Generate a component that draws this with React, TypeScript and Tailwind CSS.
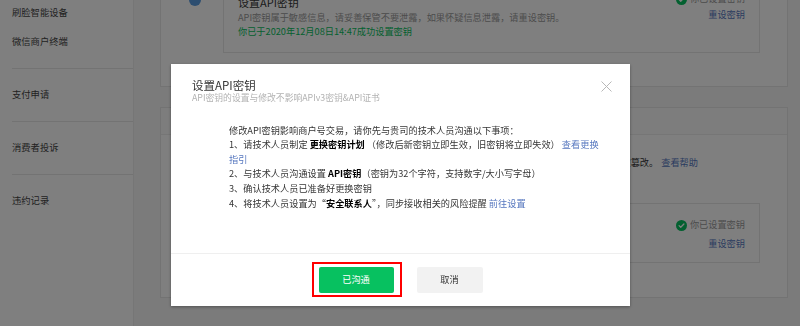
import React from 'react';

const LINK = 'text-[#5677bf]';

function CheckBadge() {
  return (
    <svg width="11" height="11" viewBox="0 0 16 16" className="shrink-0">
      <circle cx="8" cy="8" r="8" fill="#07c160" />
      <path d="M4.5 8.2l2.4 2.4 4.6-4.8" fill="none" stroke="#fff" strokeWidth="1.8" strokeLinecap="round" strokeLinejoin="round" />
    </svg>
  );
}

function Sidebar() {
  const groups = [['刷脸智能设备', '微信商户终端'], ['支付申请'], ['消费者投诉'], ['违约记录']];
  return (
    <aside className="w-[134px] shrink-0 bg-white border-r border-[#ececec] pl-3">
      <div className="-mt-[13px]">
        {groups.map((g, i) => (
          <div key={i} className={`py-[11.5px] ${i < groups.length - 1 ? 'border-b border-[#e6e6e6]' : ''}`}>
            {g.map((t) => (
              <div key={t} className="h-[29px] flex items-center text-[9.3px] text-[#444]">
                {t}
              </div>
            ))}
          </div>
        ))}
      </div>
    </aside>
  );
}

function MainContent() {
  return (
    <main className="flex-1 bg-[#f7f7f7] pl-[26px] pr-3">
      <div className="-mt-[41px] flex flex-col gap-5">
        {/* API密钥 card */}
        <section className="bg-white border border-[#e6e6e6] pt-[20px] pb-[33px] flex">
          <div className="w-[62px] flex justify-center pl-[6px]">
            <div className="w-3 h-3 rounded-full bg-[#5a9ce0] mt-[14px]" />
          </div>
          <div className="flex-1 mr-[27px] border border-[#e6e6e6] px-[14px] pt-[14px] pb-[14px] flex justify-between">
            <div>
              <div className="text-[11px] leading-[14px] text-[#353535]">设置API密钥</div>
              <div className="text-[9.2px] leading-[14px] text-[#999] mt-[1px]">
                API密钥属于敏感信息，请妥善保管不要泄露，如果怀疑信息泄露，请重设密钥。
              </div>
              <div className="text-[9.2px] leading-[14px] text-[#07c160]">你已于2020年12月08日14:47成功设置密钥</div>
            </div>
            <div className="flex flex-col items-end -mt-[3px]">
              <div className="flex items-center gap-[3px] h-[14px] text-[9.2px] text-[#999]">
                <CheckBadge />
                你已设置密钥
              </div>
              <div className={`text-[9.2px] leading-[14px] mt-[1px] ${LINK}`}>重设密钥</div>
            </div>
          </div>
        </section>

        {/* APIv3密钥 card */}
        <section className="bg-white border border-[#e6e6e6] pb-[34px]">
          <div className="h-[27px] bg-[#fafafa] border-b border-[#ececec] flex items-center pl-3 text-[10px] text-[#353535]">
            API安全
          </div>
          <div className="mt-[20px] ml-[76px] w-[461px] flex justify-end whitespace-nowrap text-[9.2px] leading-[14px] text-[#353535] overflow-hidden">
            <span>APIv3密钥主要用于平台证书解密、回调信息解密，请妥善保管，避免回调报文被解密或被篡改。</span>
            <span className={`ml-[3px] ${LINK}`}>查看帮助</span>
          </div>
          <div className="mt-[34px] ml-[62px] mr-[27px] border border-[#e6e6e6] px-[14px] pt-[14px] pb-[12px] flex justify-between">
            <div>
              <div className="text-[11px] leading-[14px] text-[#353535]">设置APIv3密钥</div>
              <div className="text-[9.2px] leading-[14px] text-[#999] mt-[4px]">APIv3密钥用于解密回调报文</div>
            </div>
            <div className="flex flex-col items-end">
              <div className="flex items-center gap-[3px] h-[14px] text-[9.2px] text-[#999]">
                <CheckBadge />
                你已设置密钥
              </div>
              <div className={`text-[9.2px] leading-[14px] mt-[4px] ${LINK}`}>重设密钥</div>
            </div>
          </div>
        </section>
      </div>
    </main>
  );
}

function Modal() {
  return (
    <div className="fixed inset-0 bg-black/50 flex justify-center items-start pt-[64px] pl-px">
      <div className="w-[459px] h-[242px] bg-white shadow-[0_1px_3px_rgba(0,0,0,0.35)] flex flex-col">
        <div className="relative pt-[14px] pl-[21px]">
          <div className="text-[11.5px] leading-[14px] text-[#353535]">设置API密钥</div>
          <div className="text-[8.8px] leading-[12px] text-[#b2b2b2]">API密钥的设置与修改不影响APIv3密钥&amp;API证书</div>
          <button className="absolute top-[17px] right-[18px] w-[11px] h-[11px]" title="关闭">
            <svg width="11" height="11" viewBox="0 0 11 11">
              <path d="M0.5 0.5l10 10M10.5 0.5l-10 10" stroke="#b8b8b8" strokeWidth="1" />
            </svg>
          </button>
        </div>

        <div className="mt-[18.7px] ml-[58px] w-[374px] text-[9.2px] leading-[14.6px] text-[#353535]">
          <p>修改API密钥影响商户号交易，请你先与贵司的技术人员沟通以下事项：</p>
          <p>
            1、请技术人员制定 <b className="font-semibold text-black">更换密钥计划</b> （修改后新密钥立即生效，旧密钥将立即失效）{' '}
            <span className={LINK}>查看更换指引</span>
          </p>
          <p>
            2、与技术人员沟通设置 <b className="font-semibold text-black">API密钥</b>（密钥为32个字符，支持数字/大小写字母）
          </p>
          <p>3、确认技术人员已准备好更换密钥</p>
          <p>
            4、将技术人员设置为“<b className="font-semibold text-black">安全联系人</b>”，同步接收相关的风险提醒{' '}
            <span className={LINK}>前往设置</span>
          </p>
        </div>

        <div className="mt-auto border-t border-[#efefef] h-[53px] flex justify-center items-start pt-[13px] gap-[23px]">
          <button className="relative w-[75px] h-[26px] rounded-[2px] bg-[#07c160] text-white text-[9.2px]">
            已沟通
            <span className="absolute -top-[5px] -bottom-[4px] -left-[7px] -right-[8px] border-2 border-[#f00]" />
          </button>
          <button className="w-[66px] h-[26px] rounded-[2px] bg-[#f2f2f2] text-[#353535] text-[9.2px]">取消</button>
        </div>
      </div>
    </div>
  );
}

export default function App() {
  return (
    <div className="w-[800px] h-[326px] overflow-hidden flex font-['Noto_Sans_CJK_SC','Noto_Sans',sans-serif] relative">
      <Sidebar />
      <MainContent />
      <Modal />
    </div>
  );
}
